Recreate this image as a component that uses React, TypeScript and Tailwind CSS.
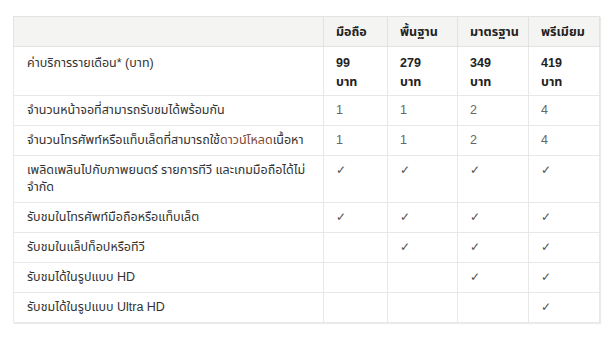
import React from "react";

const C = "✓";

type Row = { label: React.ReactNode; vals: React.ReactNode[] };

const rows: Row[] = [
  { label: "จำนวนหน้าจอที่สามารถรับชมได้พร้อมกัน", vals: ["1", "1", "2", "4"] },
  {
    label: (
      <>
        จำนวนโทรศัพท์หรือแท็บเล็ตที่สามารถใช้<span className="text-[#7d4a3c]">ดาวน์โหลด</span>เนื้อหา
      </>
    ),
    vals: ["1", "1", "2", "4"],
  },
  {
    label: (
      <>
        เพลิดเพลินไปกับภาพยนตร์ รายการทีวี และเกมมือถือได้ไม่
        <br />
        จำกัด
      </>
    ),
    vals: [C, C, C, C],
  },
  { label: "รับชมในโทรศัพท์มือถือหรือแท็บเล็ต", vals: [C, C, C, C] },
  { label: "รับชมในแล็ปท็อปหรือทีวี", vals: ["", C, C, C] },
  { label: "รับชมได้ในรูปแบบ HD", vals: ["", "", C, C] },
  { label: "รับชมได้ในรูปแบบ Ultra HD", vals: ["", "", "", C] },
];

const font = { fontFamily: '"Liberation Sans", "Noto Sans Thai", "Noto Sans Thai UI", "Noto Sans", sans-serif' };

export default function App() {
  return (
    <div className="w-[614px] h-[345px] bg-white overflow-hidden" style={font}>
      <div className="pt-[16px] pl-[13px]">
        <table className="border-collapse w-[586px] table-fixed border border-[#dcdcdc] shadow-[1px_1px_1px_rgba(0,0,0,0.08)] text-[12.5px] text-[#333]">
          <colgroup>
            <col className="w-[310px]" />
            <col className="w-[64px]" />
            <col className="w-[70px]" />
            <col className="w-[71px]" />
            <col className="w-[71px]" />
          </colgroup>
          <thead>
            <tr className="bg-[#f4f4f3]">
              <th className="border border-[#e3e3e3] h-[30px]"></th>
              {["มือถือ", "พื้นฐาน", "มาตรฐาน", "พรีเมียม"].map((h) => (
                <th
                  key={h}
                  className="border border-[#e3e3e3] text-left font-bold text-[#222] px-[12px] pt-[1px] leading-[17px] align-middle whitespace-nowrap"
                >
                  {h}
                </th>
              ))}
            </tr>
          </thead>
          <tbody>
            <tr>
              <td className="border border-[#e8e8e8] px-[13px] pt-[8px] pb-[5px] align-top leading-[17px] whitespace-nowrap">
                ค่าบริการรายเดือน* (บาท)
              </td>
              {["99", "279", "349", "419"].map((p) => (
                <td
                  key={p}
                  className="border border-[#e8e8e8] px-[12px] pt-[7px] pb-[3px] align-top font-bold text-[#222] leading-[19px]"
                >
                  {p}
                  <br />
                  บาท
                </td>
              ))}
            </tr>
            {rows.map((r, i) => (
              <tr key={i}>
                <td className="border border-[#e8e8e8] px-[13px] pt-[6px] pb-[6px] align-top leading-[17px] whitespace-nowrap">
                  {r.label}
                </td>
                {r.vals.map((v, j) => (
                  <td
                    key={j}
                    className={
                      "border border-[#e8e8e8] px-[12px] pt-[6px] pb-[6px] align-top leading-[17px] " +
                      (v === C ? "text-[#555] text-[12px]" : "text-[#666]")
                    }
                  >
                    {v}
                  </td>
                ))}
              </tr>
            ))}
          </tbody>
        </table>
      </div>
    </div>
  );
}
